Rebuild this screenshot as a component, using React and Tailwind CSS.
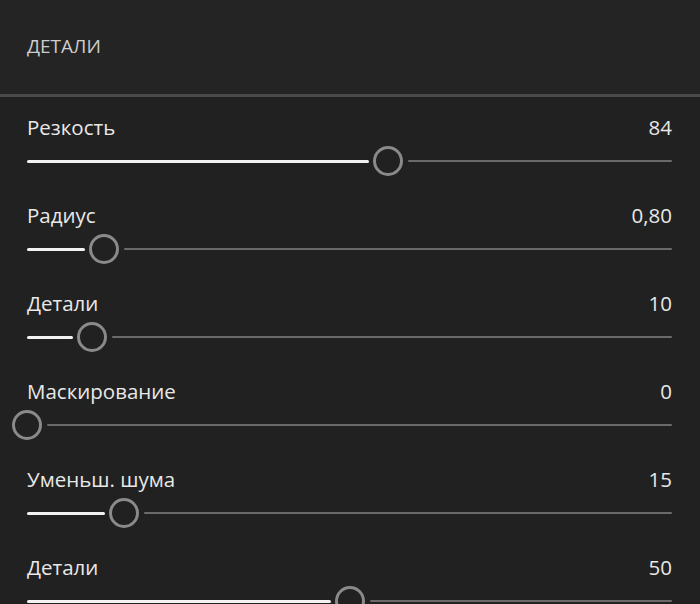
const rows = [
    { label: "Резкость", value: "84", f: 84 / 150 },
    { label: "Радиус", value: "0,80", f: 0.3 / 2.5 },
    { label: "Детали", value: "10", f: 0.1 },
    { label: "Маскирование", value: "0", f: 0 },
    { label: "Уменьш. шума", value: "15", f: 0.15 },
    { label: "Детали", value: "50", f: 0.5 },
]

const TRACK = 645

// ─── Slider ───

const Slider = ({ f }) => (
    <div className="flex items-center h-[36px] pl-[12px] pr-[13px]">
        {f > 0 && (
            <div
                className="ml-[15px] mr-[4px] h-[3px] bg-[#f2f2f2] rounded-full"
                style={{ width: Math.round(f * TRACK - 19) }}
            />
        )}
        <div className="w-[30px] h-[30px] shrink-0 rounded-full border-[3.5px] border-[#8a8a8a]" />
        <div className="ml-[5px] mr-[15px] flex-1 h-[2px] bg-[#6a6a6a] rounded-full" />
    </div>
)

// ─── Row ───

const Row = ({ label, value, f }) => (
    <div className="pt-[17px] pb-[6px]">
        <div className="flex items-center justify-between h-[29px] pl-[27px] pr-[28px] pb-[2px] text-[20.5px] text-[#e8e8e8]">
            <span>{label}</span>
            <span>{value}</span>
        </div>
        <Slider f={f} />
    </div>
)

export default function App() {
    return (
        <div
            className="w-[700px] h-[604px] overflow-hidden bg-[#212121]"
            style={{ fontFamily: '"Open Sans", "Noto Sans", sans-serif' }}
        >
            <div className="h-[94px] bg-[#242424] flex items-center pl-[27px] pb-[2px]">
                <span className="text-[19px] text-[#cdcdcd]">ДЕТАЛИ</span>
            </div>
            <div className="h-[3px] bg-[#4a4a4a]" />
            {rows.map((r, i) => (
                <Row key={i} {...r} />
            ))}
        </div>
    )
}
